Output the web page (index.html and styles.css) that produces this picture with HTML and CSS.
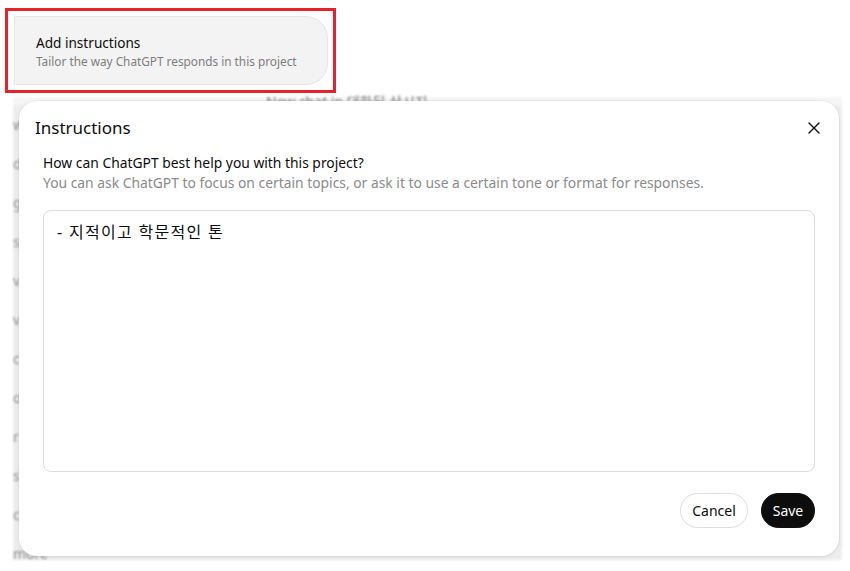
FILE: index.html
```html
<!DOCTYPE html>
<html lang="ko">
<head>
<meta charset="utf-8">
<title>Instructions</title>
<link rel="stylesheet" href="styles.css">
</head>
<body>
<div class="highlight">
  <div class="add-card">
    <div class="add-title">Add instructions</div>
    <div class="add-sub">Tailor the way ChatGPT responds in this project</div>
  </div>
</div>

<div class="stage">
  <div class="backdrop">
    <div class="bd-top">New chat in 대화된 산시지</div>
    <div class="bd-list">
      <span>w</span><span>d</span><span>g</span><span>s</span><span>v</span><span>v</span><span>c</span><span>o</span><span>r</span><span>s</span><span>c</span><span>more</span>
    </div>
  </div>

  <div class="modal">
    <div class="modal-head">
      <h2 class="modal-title">Instructions</h2>
      <button class="close" aria-label="Close">
        <svg width="14" height="14" viewBox="0 0 14 14"><path d="M2 2 L12 12 M12 2 L2 12" stroke="#0d0d0d" stroke-width="1.4" stroke-linecap="round"/></svg>
      </button>
    </div>
    <div class="modal-body">
      <p class="q">How can ChatGPT best help you with this project?</p>
      <p class="hint">You can ask ChatGPT to focus on certain topics, or ask it to use a certain tone or format for responses.</p>
      <div class="textbox">- 지적이고 학문적인 톤</div>
      <div class="actions">
        <button class="btn cancel">Cancel</button>
        <button class="btn save">Save</button>
      </div>
    </div>
  </div>
</div>
</body>
</html>
```

FILE: styles.css
```css
* { box-sizing: border-box; }
html, body { margin: 0; padding: 0; background: #ffffff; }
body {
  width: 850px;
  height: 571px;
  overflow: hidden;
  font-family: "Noto Sans", "Noto Sans CJK KR", sans-serif;
  color: #0d0d0d;
}

.highlight {
  margin: 8px 0 0 5px;
  width: 331px;
  height: 85px;
  border: 3px solid #e5212b;
  padding: 5px 5px 5px 6px;
}
.add-card {
  height: 100%;
  background: #f3f3f3;
  border: 1px solid #e6e6e6;
  border-radius: 0 22px 22px 0;
  padding: 17px 0 0 21px;
}
.add-title { font-size: 13.6px; line-height: 18px; color: #0d0d0d; }
.add-sub { font-size: 11.8px; line-height: 18px; color: #7d7d7d; }

.stage {
  position: relative;
  margin: 4px 0 0 13px;
  width: 829px;
  height: 463px;
}
.backdrop {
  height: 100%;
  background: #eeeeee;
  filter: blur(1.2px);
  color: #8c8c8c;
  font-size: 14px;
}
.bd-top {
  padding: 0 0 0 253px;
  height: 8px;
  line-height: 10px;
  color: #777;
  background: #f6f6f6;
}
.bd-list {
  display: flex;
  flex-direction: column;
  gap: 27px;
  padding: 14px 0 0 0;
}
.bd-list span { line-height: 12px; }

.modal {
  position: absolute;
  left: 6px;
  top: 4px;
  width: 820px;
  height: 455px;
  background: #ffffff;
  border-radius: 18px;
  box-shadow: 0 0 0 1px rgba(0,0,0,0.04), 0 2px 6px rgba(0,0,0,0.06);
  display: flex;
  flex-direction: column;
}
.modal-head {
  display: flex;
  align-items: center;
  justify-content: space-between;
  padding: 16px 18px 0 16px;
  height: 38px;
}
.modal-title {
  margin: 0;
  font-size: 17px;
  font-weight: 400;
  line-height: 22px;
}
.close {
  border: 0;
  background: none;
  padding: 0;
  width: 14px;
  height: 14px;
  display: flex;
  cursor: pointer;
}
.modal-body {
  padding: 14px 24px 28px 24px;
  display: flex;
  flex-direction: column;
  flex: 1;
}
.q, .hint { margin: 0; font-size: 13.85px; line-height: 20px; }
.q { color: #0d0d0d; }
.hint { color: #8a8a8a; }
.textbox {
  margin-top: 17px;
  height: 262px;
  border: 1px solid #dcdcdc;
  border-radius: 8px;
  padding: 10px 13px;
  font-size: 16px;
  line-height: 22px;
  letter-spacing: 1.3px;
  color: #0d0d0d;
}
.actions {
  margin-top: auto;
  display: flex;
  justify-content: flex-end;
  gap: 13px;
}
.btn {
  height: 35px;
  border-radius: 18px;
  font-family: inherit;
  font-size: 14px;
  padding: 0;
  cursor: pointer;
}
.cancel { background: #fff; border: 1px solid #dedede; color: #0d0d0d; width: 68px; }
.save { background: #0d0d0d; border: 1px solid #0d0d0d; color: #fff; width: 54px; }
```
